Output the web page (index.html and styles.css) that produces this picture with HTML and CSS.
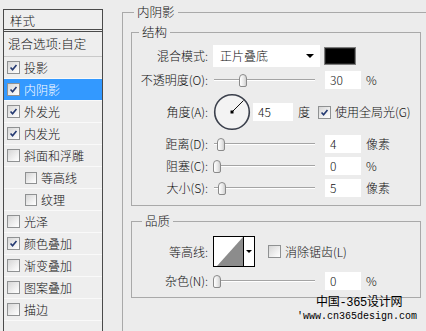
FILE: index.html
```html
<!DOCTYPE html>
<html lang="zh">
<head>
<meta charset="utf-8">
<title>图层样式 - 内阴影</title>
<link rel="stylesheet" href="styles.css">
</head>
<body>
<div class="page">
  <aside class="styles-panel">
    <div class="panel-title">样式</div>
    <ul class="style-list">
      <li class="item blend">混合选项:自定</li>
      <li class="item"><span class="cb checked"><svg viewBox="0 0 13 13"><path d="M3 6.5 L5.4 9.2 L10 3.4"/></svg></span>投影</li>
      <li class="item selected"><span class="cb checked"><svg viewBox="0 0 13 13"><path d="M3 6.5 L5.4 9.2 L10 3.4"/></svg></span>内阴影</li>
      <li class="item"><span class="cb checked"><svg viewBox="0 0 13 13"><path d="M3 6.5 L5.4 9.2 L10 3.4"/></svg></span>外发光</li>
      <li class="item"><span class="cb checked"><svg viewBox="0 0 13 13"><path d="M3 6.5 L5.4 9.2 L10 3.4"/></svg></span>内发光</li>
      <li class="item"><span class="cb"></span>斜面和浮雕</li>
      <li class="item sub"><span class="cb"></span>等高线</li>
      <li class="item sub"><span class="cb"></span>纹理</li>
      <li class="item"><span class="cb"></span>光泽</li>
      <li class="item"><span class="cb checked"><svg viewBox="0 0 13 13"><path d="M3 6.5 L5.4 9.2 L10 3.4"/></svg></span>颜色叠加</li>
      <li class="item"><span class="cb"></span>渐变叠加</li>
      <li class="item"><span class="cb"></span>图案叠加</li>
      <li class="item"><span class="cb"></span>描边</li>
    </ul>
  </aside>

  <main class="settings">
    <fieldset class="group outer">
      <legend class="legend-outer">内阴影</legend>

      <fieldset class="group struct">
        <legend class="legend-struct">结构</legend>
        <div class="rows struct-rows">
          <div class="row">
            <span class="label">混合模式:</span>
            <div class="select"><span>正片叠底</span><i class="arrow"></i></div>
            <span class="swatch"></span>
          </div>
          <div class="row">
            <span class="label">不透明度(O):</span>
            <div class="slider"><span class="track"></span><span class="thumb" style="left:26px"></span></div>
            <span class="field">30</span>
            <span class="unit">%</span>
          </div>
          <div class="row">
            <span class="label">角度(A):</span>
            <svg class="dial" viewBox="0 0 38 38" width="38" height="38">
              <circle cx="19" cy="19" r="17.3" fill="#f3f3f3" stroke="#3b404c" stroke-width="1.6"/>
              <line x1="19" y1="19" x2="30.5" y2="7.5" stroke="#111" stroke-width="1"/>
              <rect x="17.5" y="17.5" width="3" height="3" fill="#000"/>
            </svg>
            <span class="field angle">45</span>
            <span class="unit">度</span>
            <span class="cb checked global"><svg viewBox="0 0 13 13"><path d="M3 6.5 L5.4 9.2 L10 3.4"/></svg></span>
            <span class="cb-label">使用全局光(G)</span>
          </div>
          <div class="row">
            <span class="label">距离(D):</span>
            <div class="slider"><span class="track"></span><span class="thumb" style="left:4px"></span></div>
            <span class="field">4</span>
            <span class="unit">像素</span>
          </div>
          <div class="row">
            <span class="label">阻塞(C):</span>
            <div class="slider"><span class="track"></span><span class="thumb" style="left:0px"></span></div>
            <span class="field">0</span>
            <span class="unit">%</span>
          </div>
          <div class="row">
            <span class="label">大小(S):</span>
            <div class="slider"><span class="track"></span><span class="thumb" style="left:5px"></span></div>
            <span class="field">5</span>
            <span class="unit">像素</span>
          </div>
        </div>
      </fieldset>

      <fieldset class="group quality">
        <legend class="legend-quality">品质</legend>
        <div class="rows quality-rows">
          <div class="row">
            <span class="label">等高线:</span>
            <div class="contour">
              <svg class="curve" viewBox="0 0 29 29" width="29" height="29">
                <rect x="0" y="0" width="29" height="29" fill="#fff"/>
                <polygon points="3,29 29,0 29,29" fill="#8c8c8c"/>
              </svg>
              <span class="contour-drop"><i class="mini-arrow"></i></span>
            </div>
            <span class="cb aa"></span>
            <span class="cb-label">消除锯齿(L)</span>
          </div>
          <div class="row">
            <span class="label">杂色(N):</span>
            <div class="slider"><span class="track"></span><span class="thumb" style="left:0px"></span></div>
            <span class="field">0</span>
            <span class="unit">%</span>
          </div>
        </div>
      </fieldset>
    </fieldset>
  </main>
</div>

<div class="watermark">
  <div class="wm-title">中国-365设计网</div>
  <div class="wm-url">'www.cn365design.com</div>
</div>
</body>
</html>
```

FILE: styles.css
```css
* { box-sizing: border-box; }

body {
  margin: 0;
  width: 426px;
  height: 331px;
  overflow: hidden;
  position: relative;
  background: #ececec;
  color: #111;
  font: 12px/14px "Noto Sans CJK SC", "Liberation Sans", sans-serif;
  font-weight: 300;
}

.page {
  display: flex;
  align-items: flex-start;
}

/* ---------- left styles list ---------- */
.styles-panel {
  flex: none;
  width: 100px;
  height: 322px;
  margin: 9px 0 0 3px;
  border: 1px solid #4a4a4a;
  border-bottom: none;
  background: #eeeeee;
}

.panel-title {
  height: 22px;
  padding: 3px 0 0 6px;
  line-height: 15px;
  font-size: 12.5px;
  border-bottom: 3px double #4a4a4a;
}

.style-list {
  list-style: none;
  margin: 0;
  padding: 0;
}

.item {
  display: flex;
  align-items: center;
  height: 22px;
  padding-left: 3px;
  border-bottom: 1px solid #f9f9f9;
  white-space: nowrap;
}

.item.blend {
  height: 25px;
  padding-left: 4px;
  border-bottom: 1px solid #c9c9c9;
  font-size: 12.5px;
}

.item.sub { padding-left: 21px; }

.item.selected {
  background: #3399ff;
  color: #fff;
}

.cb {
  flex: none;
  display: inline-block;
  width: 13px;
  height: 13px;
  margin-right: 4px;
  border: 1px solid #8f9192;
  background: linear-gradient(135deg, #d6d6d6 0%, #f4f4f4 70%, #ffffff 100%);
}

.sub .cb {
  width: 12px;
  height: 12px;
}

.cb svg {
  display: block;
  width: 11px;
  height: 11px;
}

.cb svg path {
  fill: none;
  stroke: #243a72;
  stroke-width: 1.9;
}

/* ---------- right settings ---------- */
.settings {
  flex: none;
  margin-left: 19px;
}

.group {
  margin: 0;
  padding: 0;
  min-width: 0;
  border: 1px solid #a9a9a9;
}

legend {
  padding: 0 3px;
  line-height: 14px;
  font-size: 12.5px;
}

.outer {
  margin-top: 5px;
  width: 304px;
  height: 326px;
  padding-left: 8px;
  border-right: none;
  border-bottom: none;
}

.legend-outer { margin-left: 3px; }

.struct {
  margin-top: 6px;
  width: 290px;
  height: 181px;
}

.legend-struct { margin-left: 7px; }

.quality {
  margin-top: 8px;
  width: 290px;
  height: 84px;
}

.legend-quality { margin-left: 10px; }

.rows {
  display: flex;
  flex-direction: column;
  gap: 4px;
}

.struct-rows { padding-top: 6px; }

.quality-rows {
  padding-top: 8px;
  gap: 5px;
}

.row {
  display: flex;
  align-items: center;
  white-space: nowrap;
}

.label {
  flex: none;
  width: 76px;
  margin-right: 5px;
  text-align: right;
}

.select {
  display: flex;
  align-items: center;
  justify-content: space-between;
  width: 107px;
  height: 22px;
  padding: 0 6px 0 7px;
  background: #fff;
}

.arrow {
  width: 0;
  height: 0;
  border-left: 4px solid transparent;
  border-right: 4px solid transparent;
  border-top: 4px solid #000;
}

.swatch {
  width: 32px;
  height: 18px;
  margin-left: 4px;
  border: 1px solid #7d7d7d;
  background: #000;
  box-shadow: inset 0 0 0 1px #222;
}

.slider {
  position: relative;
  flex: none;
  width: 112px;
  height: 18px;
}

.track {
  position: absolute;
  left: 1px;
  right: 10px;
  top: 8px;
  height: 2px;
  border-top: 1px solid #a4a4a4;
  border-bottom: 1px solid #ffffff;
}

.thumb {
  position: absolute;
  top: 3px;
  width: 8px;
  height: 13px;
  border: 1px solid #8a8a8a;
  border-radius: 4px 4px 2px 2px;
  background: linear-gradient(90deg, #ffffff 0%, #e8e8e8 60%, #cfcfcf 100%);
}

.field {
  flex: none;
  width: 36px;
  height: 18px;
  padding-left: 5px;
  line-height: 18px;
  background: #fff;
}

.field.angle {
  width: 40px;
  margin-left: 2px;
}

.unit { margin-left: 5px; }

.dial { flex: none; display: block; }

.cb.global { margin-left: 8px; }

.cb-label { margin-left: 0; }

.contour {
  display: flex;
  width: 42px;
  height: 31px;
  border: 1px solid #000;
  background: #fff;
}

.curve { display: block; }

.contour-drop {
  display: flex;
  align-items: center;
  justify-content: center;
  width: 11px;
  border-left: 1px solid #000;
  background: #fff;
}

.mini-arrow {
  width: 0;
  height: 0;
  border-left: 3px solid transparent;
  border-right: 3px solid transparent;
  border-top: 3px solid #000;
}

.cb.aa { margin-left: 13px; }

/* ---------- watermark overlay ---------- */
.watermark {
  position: absolute;
  left: 297px;
  top: 296px;
  color: #000;
  font-weight: 400;
}

.wm-title {
  margin-left: 19px;
  font-size: 12px;
  line-height: 14px;
  font-family: "Liberation Mono", "Noto Sans CJK SC", monospace;
  letter-spacing: -0.3px;
}

.wm-url {
  margin-top: 1px;
  font-family: "Liberation Mono", monospace;
  font-size: 10px;
  line-height: 12px;
}
```
